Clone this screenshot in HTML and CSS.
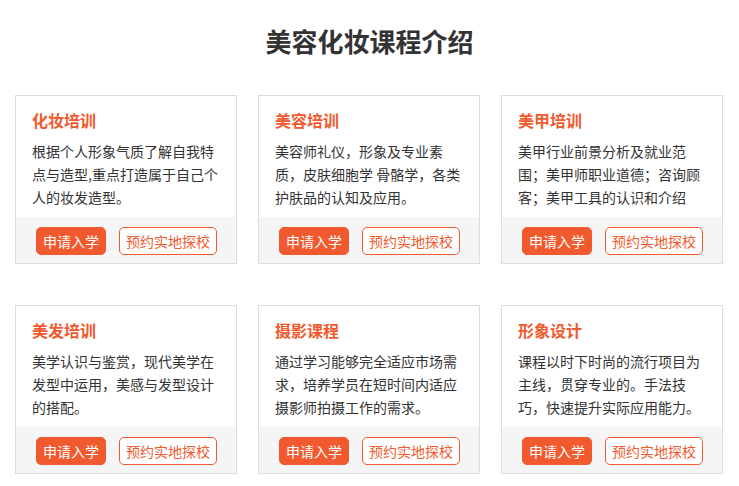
FILE: index.html
```html
<!DOCTYPE html>
<html lang="zh-CN">
<head>
  <meta charset="UTF-8" />
  <meta name="viewport" content="width=device-width, initial-scale=1.0"/>
  <title>美容化妆课程介绍</title>
  <link rel="stylesheet" href="styles.css">
</head>
<body>
  <div class="wrap">
    <h2 class="page-title">美容化妆课程介绍</h2>

    <div class="course-list">
      <div class="course">
        <div class="course-body">
          <h3>化妆培训</h3>
          <p>根据个人形象气质了解自我特点与造型,重点打造属于自己个人的妆发造型。</p>
        </div>
        <div class="course-foot">
          <a href="#" class="btn btn-fill">申请入学</a>
          <a href="#" class="btn btn-line">预约实地探校</a>
        </div>
      </div>

      <div class="course">
        <div class="course-body">
          <h3>美容培训</h3>
          <p>美容师礼仪，形象及专业素质，皮肤细胞学 骨骼学，各类护肤品的认知及应用。</p>
        </div>
        <div class="course-foot">
          <a href="#" class="btn btn-fill">申请入学</a>
          <a href="#" class="btn btn-line">预约实地探校</a>
        </div>
      </div>

      <div class="course">
        <div class="course-body">
          <h3>美甲培训</h3>
          <p>美甲行业前景分析及就业范围；美甲师职业道德；咨询顾客；美甲工具的认识和介绍</p>
        </div>
        <div class="course-foot">
          <a href="#" class="btn btn-fill">申请入学</a>
          <a href="#" class="btn btn-line">预约实地探校</a>
        </div>
      </div>

      <div class="course">
        <div class="course-body">
          <h3>美发培训</h3>
          <p>美学认识与鉴赏，现代美学在发型中运用，美感与发型设计的搭配。</p>
        </div>
        <div class="course-foot">
          <a href="#" class="btn btn-fill">申请入学</a>
          <a href="#" class="btn btn-line">预约实地探校</a>
        </div>
      </div>

      <div class="course">
        <div class="course-body">
          <h3>摄影课程</h3>
          <p>通过学习能够完全适应市场需求，培养学员在短时间内适应摄影师拍摄工作的需求。</p>
        </div>
        <div class="course-foot">
          <a href="#" class="btn btn-fill">申请入学</a>
          <a href="#" class="btn btn-line">预约实地探校</a>
        </div>
      </div>

      <div class="course">
        <div class="course-body">
          <h3>形象设计</h3>
          <p>课程以时下时尚的流行项目为主线，贯穿专业的。手法技巧，快速提升实际应用能力。</p>
        </div>
        <div class="course-foot">
          <a href="#" class="btn btn-fill">申请入学</a>
          <a href="#" class="btn btn-line">预约实地探校</a>
        </div>
      </div>
    </div>
  </div>
</body>
</html>
```

FILE: styles.css
```css
body { margin: 0; font-family: "Noto Sans CJK SC", "Noto Sans", sans-serif; color: #333; background: #fff; }
.wrap { width: 709px; margin: 0 auto; padding-top: 23px; }

.page-title { margin: 0 0 36px; font-size: 26px; line-height: 36px; font-weight: bold; text-align: center; color: #333; }

.course-list { display: grid; grid-template-columns: repeat(3, 222px); column-gap: 21px; row-gap: 41px; }

.course { border: 1px solid #ddd; background: #fff; }
.course-body { padding: 13px 16px 8px; }
.course-body h3 { margin: 0 0 9px; font-size: 16px; line-height: 22px; font-weight: bold; color: #f15a2e; }
.course-body p { margin: 0; font-size: 14px; line-height: 23px; height: 69px; color: #333; }

/* buttons row */
.course-foot { background: #f5f5f5; padding: 10px 10px 8px 20px; display: flex; gap: 13px; }
.btn { display: block; flex-shrink: 0; white-space: nowrap; height: 28px; line-height: 26px; font-size: 14px; text-align: center; text-decoration: none; border: 1px solid #f15a2e; border-radius: 5px; box-sizing: border-box; }
.btn-fill { width: 70px; background: #f15a2e; color: #fff; }
.btn-line { width: 98px; background: #fff; color: #f15a2e; }
```
